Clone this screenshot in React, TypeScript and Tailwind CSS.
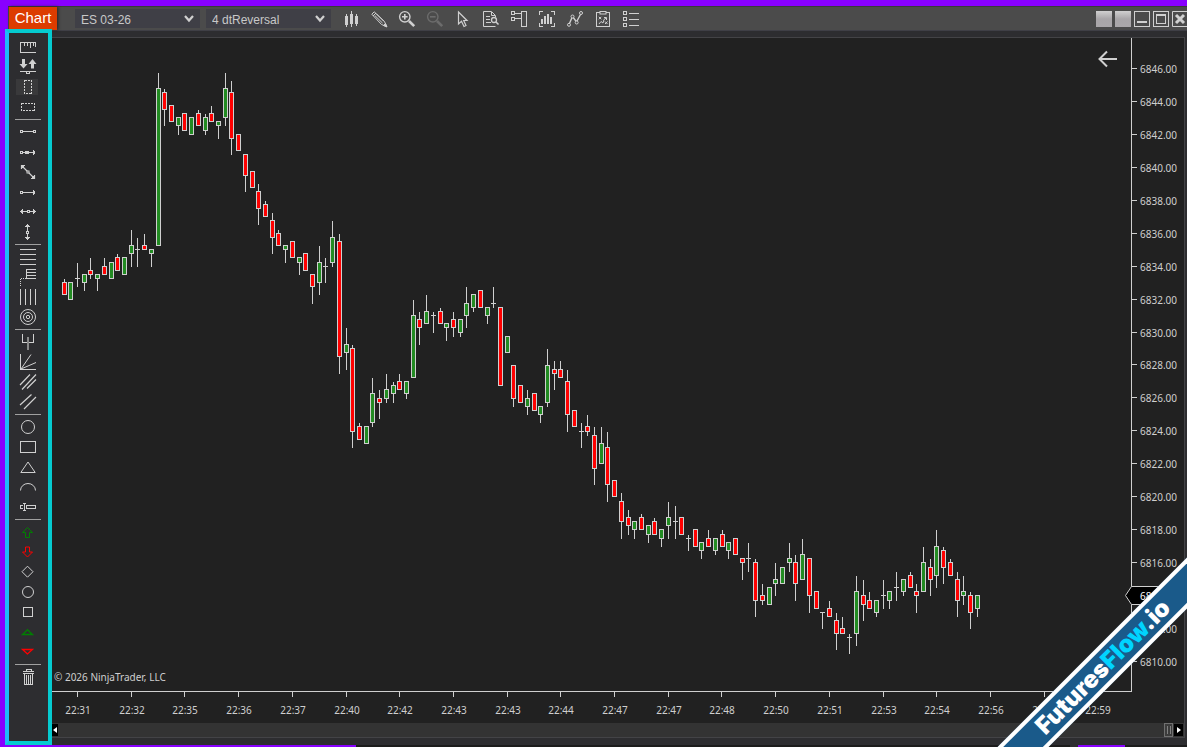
import type { ReactNode } from "react";

type Kind = "g" | "r" | "d";
/* centre x, high, body top, body bottom, low, kind (green, red, doji) */
type Candle = [number, number, number, number, number, Kind];

const candles: Candle[] = [
  [64, 279, 282, 295, 295, "r"], [70, 282, 282, 300, 300, "g"], [77, 263, 278, 279, 287, "d"],
  [84, 274, 274, 283, 291, "g"], [90, 258, 270, 275, 279, "r"], [97, 274, 274, 279, 291, "g"],
  [104, 258, 266, 275, 275, "r"], [111, 262, 262, 279, 279, "g"], [117, 254, 257, 271, 271, "r"],
  [124, 257, 257, 275, 275, "g"], [131, 230, 245, 254, 267, "g"], [137, 238, 249, 250, 267, "d"],
  [144, 234, 245, 250, 250, "r"], [151, 249, 249, 254, 267, "g"], [158, 73, 88, 246, 246, "g"],
  [164, 89, 92, 110, 126, "r"], [171, 105, 105, 122, 122, "r"], [178, 117, 117, 126, 135, "g"],
  [184, 113, 113, 131, 131, "r"], [191, 117, 117, 135, 135, "g"], [198, 110, 113, 126, 126, "r"],
  [205, 114, 117, 131, 135, "g"], [211, 106, 113, 122, 122, "r"], [218, 121, 121, 126, 139, "g"],
  [225, 73, 88, 118, 126, "g"], [231, 81, 92, 139, 155, "r"], [238, 134, 134, 151, 151, "r"],
  [245, 154, 154, 176, 192, "r"], [252, 171, 171, 188, 188, "r"], [258, 184, 191, 209, 225, "r"],
  [265, 201, 204, 217, 217, "r"], [272, 213, 220, 238, 254, "r"], [278, 230, 233, 246, 246, "r"],
  [285, 245, 245, 250, 263, "g"], [292, 241, 241, 258, 258, "r"], [299, 257, 257, 263, 275, "g"],
  [305, 253, 253, 271, 271, "r"], [312, 274, 274, 287, 304, "r"], [319, 246, 262, 283, 295, "g"],
  [325, 258, 266, 267, 283, "d"], [332, 221, 237, 263, 267, "g"], [339, 234, 241, 357, 374, "r"],
  [346, 328, 344, 353, 370, "g"], [352, 345, 348, 432, 448, "r"], [359, 423, 426, 440, 440, "r"],
  [366, 426, 426, 444, 444, "g"], [372, 378, 393, 423, 427, "g"], [379, 390, 398, 403, 419, "r"],
  [386, 374, 389, 399, 403, "g"], [393, 382, 385, 394, 403, "g"], [399, 374, 381, 390, 390, "r"],
  [406, 381, 381, 394, 399, "g"], [413, 300, 315, 378, 378, "g"], [419, 312, 319, 328, 345, "r"],
  [426, 295, 311, 324, 324, "g"], [433, 312, 315, 316, 333, "d"], [440, 308, 311, 324, 324, "r"],
  [446, 323, 323, 328, 341, "g"], [453, 312, 319, 328, 337, "r"], [460, 319, 319, 333, 337, "g"],
  [466, 287, 303, 316, 328, "g"], [473, 294, 294, 308, 312, "g"], [480, 290, 290, 308, 308, "r"],
  [487, 307, 307, 316, 324, "g"], [493, 287, 303, 304, 308, "d"], [500, 307, 307, 386, 386, "r"],
  [507, 336, 336, 353, 353, "g"], [513, 365, 365, 399, 407, "r"], [520, 385, 385, 403, 403, "r"],
  [527, 390, 398, 407, 415, "g"], [534, 393, 393, 411, 411, "r"], [540, 406, 406, 415, 423, "g"],
  [547, 349, 365, 403, 407, "g"], [554, 361, 369, 374, 390, "r"], [560, 361, 369, 378, 378, "r"],
  [567, 370, 381, 415, 432, "r"], [574, 410, 410, 427, 427, "r"], [581, 423, 431, 432, 448, "d"],
  [587, 415, 426, 432, 436, "r"], [594, 427, 435, 469, 485, "r"], [601, 427, 443, 464, 464, "g"],
  [607, 432, 447, 485, 502, "r"], [614, 480, 480, 497, 497, "r"], [621, 493, 501, 522, 539, "r"],
  [628, 510, 517, 526, 535, "r"], [634, 521, 521, 530, 539, "g"], [641, 514, 517, 530, 530, "r"],
  [648, 525, 525, 535, 543, "g"], [654, 518, 521, 535, 535, "r"], [661, 529, 529, 539, 547, "g"],
  [668, 502, 517, 526, 539, "g"], [675, 506, 521, 522, 539, "d"], [681, 517, 517, 535, 535, "r"],
  [688, 535, 538, 539, 551, "d"], [695, 529, 529, 547, 547, "r"], [701, 542, 542, 551, 559, "g"],
  [708, 530, 538, 547, 547, "r"], [715, 538, 538, 551, 555, "g"], [722, 530, 534, 547, 547, "r"],
  [728, 542, 542, 551, 559, "g"], [735, 538, 538, 555, 555, "r"], [742, 558, 558, 563, 580, "r"],
  [748, 543, 558, 559, 572, "d"], [755, 559, 562, 601, 617, "r"], [762, 584, 595, 601, 605, "r"],
  [769, 587, 587, 605, 605, "g"], [775, 563, 579, 584, 596, "g"], [782, 567, 567, 584, 584, "g"],
  [789, 543, 558, 563, 572, "g"], [795, 555, 562, 584, 601, "r"], [802, 539, 554, 580, 580, "g"],
  [809, 558, 558, 596, 613, "r"], [816, 591, 591, 609, 609, "r"], [822, 612, 612, 613, 629, "d"],
  [829, 601, 608, 617, 617, "r"], [836, 613, 620, 634, 650, "r"], [842, 617, 628, 634, 634, "r"],
  [849, 634, 637, 638, 654, "d"], [856, 576, 591, 634, 646, "g"], [863, 580, 595, 605, 621, "r"],
  [869, 592, 600, 609, 609, "r"], [876, 600, 600, 613, 617, "g"], [883, 580, 595, 596, 609, "d"],
  [889, 591, 591, 601, 609, "g"], [896, 572, 587, 588, 601, "d"], [903, 579, 579, 592, 596, "g"],
  [910, 572, 575, 588, 588, "r"], [916, 584, 591, 596, 613, "r"], [923, 547, 562, 592, 592, "g"],
  [930, 559, 567, 580, 596, "r"], [936, 530, 546, 576, 588, "g"], [943, 547, 550, 568, 584, "r"],
  [950, 559, 562, 576, 576, "r"], [957, 572, 579, 601, 617, "r"], [963, 576, 591, 596, 605, "g"],
  [970, 592, 595, 613, 629, "r"], [977, 595, 595, 609, 617, "g"],
];

const times = [
  "22:31", "22:32", "22:35", "22:36", "22:37", "22:40", "22:42", "22:43", "22:43", "22:44",
  "22:47", "22:47", "22:48", "22:50", "22:51", "22:53", "22:54", "22:56", "22:57", "22:59",
];
const prices = Array.from({ length: 19 }, (_, i) => (6846 - i * 2).toFixed(2));
const lastPrice = "6814.00";

const INK = "#cfcfcf";

function PriceChart() {
  return (
    <svg
      role="img"
      aria-label="ES 03-26 price chart"
      viewBox="52 38 1132 685"
      preserveAspectRatio="xMinYMin meet"
      className="block min-h-0 w-full flex-1 font-['Noto_Sans',sans-serif] text-[10px]"
    >
      <g shapeRendering="crispEdges">
        {candles.map(([x, high, top, bottom, low, kind]) => (
          <g key={x}>
            <rect x={x} y={high} width={1} height={low - high} fill={INK} />
            {kind === "d" ? (
              <rect x={x - 2} y={top} width={5} height={1} fill={INK} />
            ) : (
              <>
                <rect x={x - 2} y={top} width={5} height={bottom - top} fill={INK} />
                <rect x={x - 1} y={top + 1} width={3} height={bottom - top - 2} fill={kind === "g" ? "#228b22" : "#ff0000"} />
              </>
            )}
          </g>
        ))}
        <rect x={1131} y={38} width={1} height={654} fill={INK} />
        <rect x={52} y={691} width={1080} height={1} fill={INK} />
        {prices.map((p, i) => (
          <rect key={p} x={1132} y={Math.round(68 + i * 32.94)} width={5} height={1} fill={INK} />
        ))}
        {times.map((_, i) => (
          <rect key={i} x={Math.round(77 + i * 53.7)} y={692} width={1} height={5} fill={INK} />
        ))}
      </g>
      {prices.map((p, i) =>
        p === lastPrice ? null : (
          <text key={p} x={1140} y={Math.round(73 + i * 32.94)} fill={INK}>{p}</text>
        ),
      )}
      {times.map((t, i) => (
        <text key={i} x={Math.round(78 + i * 53.7)} y={714} textAnchor="middle" fill={INK}>{t}</text>
      ))}
      <text x={54} y={681} fill={INK}>© 2026 NinjaTrader, LLC</text>
      <path d="M1190 586.5H1131.500L1125.500 595.5L1131.500 604.5H1190Z" fill="#000" stroke={INK} />
      <text x={1140} y={600} fill="#fff">{lastPrice}</text>
    </svg>
  );
}

type Tool = { name: string; draw: ReactNode; color?: string; active?: boolean };

const sq = (x: number, y: number) => <rect x={x - 1} y={y - 1} width={2} height={2} fill="#2d2d30" />;
const arrowUp = "M9.5 5.500L4.500 10.500H7.500V15.500H11.500V10.500H14.500Z";

const toolGroups: Tool[][] = [
  [
    { name: "Ruler", draw: <path d="M18 5.500H2.500V15.500H18M6.500 6v3M9.500 6v3M12.500 6v5M15.500 6v3M17.500 6v4" /> },
    {
      name: "Risk-reward",
      draw: (
        <>
          <path d="M4 2h3v5h2.500L5.500 11.500L1.500 7H4ZM13 11.500h3V7h2.500L14.500 2L10.500 7H13Z" fill="currentColor" stroke="none" shapeRendering="auto" />
          <path d="M2 14.500H18M8.500 15v1.500h3V15" />
        </>
      ),
    },
    { name: "Region highlight X", active: true, draw: <rect x="6.5" y="3.5" width="7" height="13" strokeDasharray="2 1" /> },
    { name: "Region highlight Y", draw: <rect x="3.5" y="6.5" width="13" height="7" strokeDasharray="2 1" /> },
  ],
  [
    { name: "Line", draw: <><path d="M4 9.500H16" /><rect x="2.5" y="8.5" width="2" height="2" /><rect x="15.5" y="8.5" width="2" height="2" /></> },
    { name: "Extended line", draw: <><path d="M4 10.500H17M15.500 8v5M16.500 9v3" /><rect x="2.5" y="9.5" width="2" height="2" />{sq(9, 10)}<rect x="7.5" y="9.5" width="2" height="2" /></> },
    { name: "Ray", draw: <><path d="M3.500 3.500L16.500 16.500M3.500 7V3.500H7M4.500 6V4.500H6M16.500 13V16.500H13M15.500 14V15.500H14" shapeRendering="auto" strokeWidth="1.2" /><rect x="9" y="9" width="2" height="2" fill="#2d2d30" shapeRendering="auto" /></> },
    { name: "Arrow line", draw: <><path d="M4 10.500H17M15.500 8v5M16.500 9v3" /><rect x="2.5" y="9.5" width="2" height="2" /></> },
    { name: "Horizontal line", draw: <><path d="M2 9.500H18M4.500 7v5M3.500 8v3M15.500 7v5M16.500 8v3" /><rect x="9.5" y="8.5" width="2" height="2" fill="#2d2d30" /></> },
    { name: "Vertical line", draw: <><path d="M9.500 2V18M7 4.500h5M8 3.500h3M7 15.500h5M8 16.500h3" /><rect x="8.5" y="9.5" width="2" height="2" fill="#2d2d30" /></> },
  ],
  [
    { name: "Fibonacci retracements", draw: <path d="M2 2.500H18M2 7.500H18M2 12.500H18M2 17.500H18" /> },
    { name: "Fibonacci extensions", draw: <><path d="M18 2.500H8.500V11.500H18M9 5.500H18M9 8.500H18" /><path d="M8 11.500H2.500V19" strokeDasharray="1 1" /></> },
    { name: "Fibonacci time extensions", draw: <path d="M2.500 2V18M7.500 2V18M12.500 2V18M17.500 2V18" /> },
    { name: "Fibonacci circle", draw: <g shapeRendering="auto"><circle cx="10" cy="10" r="7.5" /><circle cx="10" cy="10" r="4.5" /><circle cx="10" cy="10" r="1.7" /></g> },
  ],
  [
    { name: "Andrews pitchfork", draw: <><path d="M4.500 2V10.500H15.500V2" /><rect x="9" y="5" width="2" height="13" fill="#8a8a8a" stroke="none" /></> },
    { name: "Gann fan", draw: <><path d="M2.500 2V17.500H18" /><path d="M3 17L13 2.500M3 17L18 10.500" shapeRendering="auto" /></> },
    { name: "Regression channel", draw: <path d="M2 13L12 2.500M4 17.500L18 2.500M9 16.500L18 7.500" shapeRendering="auto" strokeWidth="1.2" /> },
    { name: "Trend channel", draw: <path d="M2 13L13.500 2.500M6 17L18 5" shapeRendering="auto" strokeWidth="1.2" /> },
  ],
  [
    { name: "Ellipse", draw: <circle cx="10" cy="10" r="6.5" shapeRendering="auto" /> },
    { name: "Rectangle", draw: <rect x="2.5" y="4.5" width="15" height="11" /> },
    { name: "Triangle", draw: <path d="M10 5L2.800 15.500H17.200Z" shapeRendering="auto" /> },
    { name: "Arc", draw: <path d="M2.500 13.500A7.500 7 0 0 1 17.500 13.500" shapeRendering="auto" /> },
    { name: "Text", draw: <path d="M6 6.500V14M5 6.500h3M5 13.500h3M4.500 8.500h-2v3h2M8 8.500h9.500v3H8Z" /> },
  ],
  [
    { name: "Arrow up", color: "text-[#008000]", draw: <path d={arrowUp} shapeRendering="auto" /> },
    { name: "Arrow down", color: "text-[#ff0000]", draw: <path d={arrowUp} shapeRendering="auto" transform="matrix(1 0 0 -1 0 20.500)" /> },
    { name: "Diamond", draw: <path d="M9.500 4.200L15 9.700L9.500 15.200L4 9.700Z" shapeRendering="auto" /> },
    { name: "Dot", draw: <circle cx="10" cy="10" r="5.5" shapeRendering="auto" /> },
    { name: "Square", draw: <rect x="5.5" y="5.5" width="9" height="9" /> },
    { name: "Triangle up", color: "text-[#008000]", draw: <path d="M9.500 7.700L4.500 12.500H14.500Z" shapeRendering="auto" strokeWidth="1.3" /> },
    { name: "Triangle down", color: "text-[#ff0000]", draw: <path d="M9.500 12L4.500 7.500H14.500Z" shapeRendering="auto" strokeWidth="1.3" /> },
  ],
  [
    {
      name: "Remove all drawings",
      draw: <path d="M8 4V2.500h5V4M5 4.500H16M5 6.500H16M6.500 7V17.500H14.500V7M8.500 8v9M10.500 8v9M12.500 8v9" />,
    },
  ],
];

function DrawingTools() {
  return (
    <aside
      aria-label="Drawing tools"
      className="relative z-10 -mt-0.5 -ml-[3px] flex w-[47px] shrink-0 flex-col items-center border-4 border-[#05cbd0] border-l-[#20b9fb] bg-[#2d2d30] pt-1 pr-px text-[#d0d0d0]"
    >
      {toolGroups.map((group, g) => (
        <div key={g} className="flex flex-col items-center">
          {g > 0 && <div className="my-0.5 h-px w-[26px] bg-[#a0a0a0]" />}
          {group.map((tool) => (
            <button
              key={tool.name}
              type="button"
              aria-label={tool.name}
              className={`flex h-5 w-6 items-center ${tool.active ? "justify-end bg-[#39393b] bg-clip-content py-0.5 pr-0.5" : "justify-center"} ${tool.color ?? ""}`}
            >
              <svg width="20" height="20" viewBox="0 0 20 20" fill="none" stroke="currentColor" shapeRendering="crispEdges" className="shrink-0">
                {tool.draw}
              </svg>
            </button>
          ))}
        </div>
      ))}
    </aside>
  );
}

const toolbar: Tool[] = [
  {
    name: "Bar style",
    draw: <path d="M2 5h3v9h-3ZM3 3h1v13h-1ZM7 3h3v10h-3ZM8 0h1v16h-1ZM12 5h3v8h-3ZM13 3h1v12h-1Z" fill="currentColor" stroke="none" shapeRendering="crispEdges" />,
  },
  { name: "Drawing tools", draw: <><path d="M0.800 3.200L3.200 0.800L13.500 10.500L15.500 15.500L10.500 13.500Z" /><path d="M3.800 4.500L11.500 12M5.500 3L13 10.500M2 5L5 2M13 13L15.500 15.500" /><path d="M12.500 14.500L14.500 12.500L16 16Z" fill="currentColor" /></> },
  { name: "Zoom in", draw: <><circle cx="5.8" cy="5.8" r="5.2" strokeWidth="1.4" /><path d="M3 5.800h5.600M5.800 3v5.600" strokeWidth="1.6" /><path d="M10 10L15.200 15.200" strokeWidth="2.6" /></> },
  { name: "Zoom out", color: "text-[#6c6c6c]", draw: <><circle cx="5.8" cy="5.8" r="5.2" strokeWidth="1.4" /><path d="M3 5.800h5.600" strokeWidth="1.6" /><path d="M10 10L15.200 15.200" strokeWidth="2.6" /></> },
  { name: "Cursor", draw: <path d="M3.500 1V13L6.500 10.300L9 15.500L11 14.500L8.700 9.500H12Z" strokeWidth="1.2" /> },
  { name: "Data box", draw: <><path d="M12.500 15.500H0.500V0.500H8.500L12.500 4.500V6M8.500 1V4.500H12" /><path d="M3 5.500H7M3 8.500H7M3 11.500H8" /><circle cx="11" cy="9" r="2.5" strokeWidth="1.3" /><path d="M12.800 10.800L15.500 13.500" strokeWidth="1.6" /></> },
  { name: "Chart trader", draw: <path d="M10.500 0.500h5v15h-5ZM0.500 0.500h3v3h-3ZM0.500 6.500h3v3h-3ZM4 2.500H10M4 7.500H10" shapeRendering="crispEdges" /> },
  { name: "Strategy analyzer", draw: <><path d="M0.500 4V0.500H4M12 0.500H15.500V4M0.500 12V15.500H4M12 15.500H15.500V12" shapeRendering="crispEdges" /><path d="M2 8h2v5H2ZM5 5h2v8H5ZM8 3h2v10H8ZM11 6h2v7h-2Z" fill="currentColor" stroke="none" /></> },
  { name: "Indicators", draw: <><path d="M2 13.500L5.500 5.500L9.500 11L14 2.500" strokeWidth="1.4" /><circle cx="2" cy="13.800" r="1.5" fill="#4b4b4b" /><circle cx="5.500" cy="5.500" r="1.500" fill="#4b4b4b" /><circle cx="9.700" cy="11.500" r="1.500" fill="#4b4b4b" /><circle cx="14" cy="2" r="1.500" fill="#4b4b4b" /></> },
  { name: "Strategies", draw: <><path d="M1.500 1.500h13v14h-13Z" shapeRendering="crispEdges" /><rect x="5" y="0.500" width="6" height="2.500" fill="#4b4b4b" /><path d="M3.800 5.800l2.500 2.500M6.300 5.800l-2.500 2.500M10 10.500l2.500 2.500M12.500 10.500L10 13M4 13l2-2.500 2 1.500 1-3.500 2-1.500M9 6.500h2.500V9" /></> },
  { name: "Properties", draw: <path d="M0.500 0.500h3v3h-3ZM0.500 6.500h3v3h-3ZM0.500 12.500h3v3h-3ZM6 2.500H16M6 8.500H16M6 14.500H16" shapeRendering="crispEdges" /> },
];

function Picker({ label, value }: { label: string; value: string }) {
  return (
    <label className="relative block h-[19px] w-[125px] bg-[#3f3f46]">
      <span className="sr-only">{label}</span>
      <select className="block h-full w-full appearance-none bg-transparent pt-0.5 pr-6 pl-1.5 text-[12px] leading-4 text-[#c8c8c8] outline-none">
        <option>{value}</option>
      </select>
      <svg viewBox="0 0 10 8" fill="none" stroke="#d0d0d0" strokeWidth="2.2" className="pointer-events-none absolute top-1.5 right-1.5 h-2 w-2.5">
        <path d="M1 1L5 5.500L9 1" />
      </svg>
    </label>
  );
}

function TitleBar() {
  return (
    <header className="flex h-[25px] shrink-0 items-center border-y border-t-[#3a3a3a] border-b-[#3f3f46] bg-[#4b4b4b] pl-px">
      <h1 className="flex h-full w-12 items-center justify-center bg-[#dc3c00] text-[15px] text-white shadow-[1px_0_3px_#222]">Chart</h1>
      <div className="ml-[18px] flex gap-1.5">
        <Picker label="Instrument" value="ES 03-26" />
        <Picker label="Bar type" value="4 dtReversal" />
      </div>
      <nav aria-label="Chart toolbar" className="ml-1.5 flex text-[#d0d0d0]">
        {toolbar.map((tool) => (
          <button key={tool.name} type="button" aria-label={tool.name} className={`flex h-5 w-7 items-center justify-center ${tool.color ?? ""}`}>
            <svg width="16" height="16" viewBox="0 0 16 16" fill="none" stroke="currentColor" className="overflow-visible">
              {tool.draw}
            </svg>
          </button>
        ))}
      </nav>
      <div className="-mr-px ml-auto flex gap-[3px] text-[#d0d0d0]">
        <button type="button" aria-label="Instrument link" className="size-4 bg-linear-to-b from-[#d0d0d0] via-[#a8a5a8] to-[#aaa7aa]" />
        <button type="button" aria-label="Interval link" className="size-4 bg-linear-to-b from-[#d0d0d0] via-[#a8a5a8] to-[#aaa7aa]" />
        <button type="button" aria-label="Minimize" className="size-4">
          <svg viewBox="0 0 16 16" fill="none" stroke="currentColor" shapeRendering="crispEdges"><path d="M0.500 0.500h15v15H0.500Z" /><path d="M3 11H13" strokeWidth="2" /></svg>
        </button>
        <button type="button" aria-label="Maximize" className="size-4">
          <svg viewBox="0 0 16 16" fill="none" stroke="currentColor" shapeRendering="crispEdges"><path d="M0.500 0.500h15v15H0.500ZM3.500 3.500h9v9h-9ZM3 4.500h10" /></svg>
        </button>
        <button type="button" aria-label="Close" className="size-4">
          <svg viewBox="0 0 16 16" fill="none" stroke="currentColor"><path d="M0.500 0.500h15v15H0.500Z" /><path d="M4 4L12 12M12 4L4 12" strokeWidth="3" /></svg>
        </button>
      </div>
    </header>
  );
}

function ScrollBar() {
  return (
    <div className="flex h-3.5 shrink-0 items-stretch justify-between bg-[#333333] text-white">
      <button type="button" aria-label="Scroll left" className="my-px flex w-1.5 items-center justify-center bg-black">
        <svg width="4" height="6" viewBox="0 0 4 6" fill="currentColor"><path d="M4 0V6L0 3Z" /></svg>
      </button>
      <div className="mr-px flex">
        <div className="flex w-[9px] items-center justify-center gap-0.5 border border-[#707070] bg-[#3c3c3c]">
          <span className="h-2 w-px bg-[#808080]" />
          <span className="h-2 w-px bg-[#808080]" />
        </div>
        <button type="button" aria-label="Scroll right" className="my-px ml-px flex w-[9px] items-center justify-center bg-black">
          <svg width="4" height="6" viewBox="0 0 4 6" fill="currentColor"><path d="M0 0V6L4 3Z" /></svg>
        </button>
      </div>
    </div>
  );
}

export default function App() {
  return (
    <div className="relative flex h-screen flex-col overflow-hidden bg-[#8800ff] pt-1.5 font-['Liberation_Sans',sans-serif]">
      <div className="ml-2 flex min-h-0 flex-1 flex-col bg-[#2d2d30]">
        <TitleBar />
        <div className="flex min-h-0 flex-1">
          <DrawingTools />
          <main className="relative mt-1.5 mr-0.5 mb-[7px] flex min-w-0 flex-1 flex-col border-t border-r border-b border-[#434346] bg-[#212121]">
            <PriceChart />
            <ScrollBar />
            <button type="button" aria-label="Back" className="absolute top-3 right-[66px] text-[#d0d0d0]">
              <svg width="20" height="18" viewBox="0 0 20 18" fill="none" stroke="currentColor" strokeWidth="2">
                <path d="M19 9H2M9 1.500L1.500 9L9 16.500" />
              </svg>
            </button>
          </main>
        </div>
      </div>
      <div className="flex h-0.5 shrink-0">
        <span className="w-[30%]" />
        <span className="flex-1 bg-[#1c1c1c]" />
        <span className="w-2 bg-[#2d2d30]" />
        <span className="w-[47px]" />
        <span className="w-[62px] bg-[#1c1c1c]" />
      </div>
      <div className="absolute -right-[76px] bottom-[62px] z-20 flex h-9 w-80 -rotate-45 items-center justify-center border-y-4 border-white bg-[#1a5a8a] font-['Inter',sans-serif] text-[24px] leading-none font-black text-white">
        <span>Futures<span className="text-[#00d4ff]">Flow</span>.io</span>
      </div>
    </div>
  );
}
